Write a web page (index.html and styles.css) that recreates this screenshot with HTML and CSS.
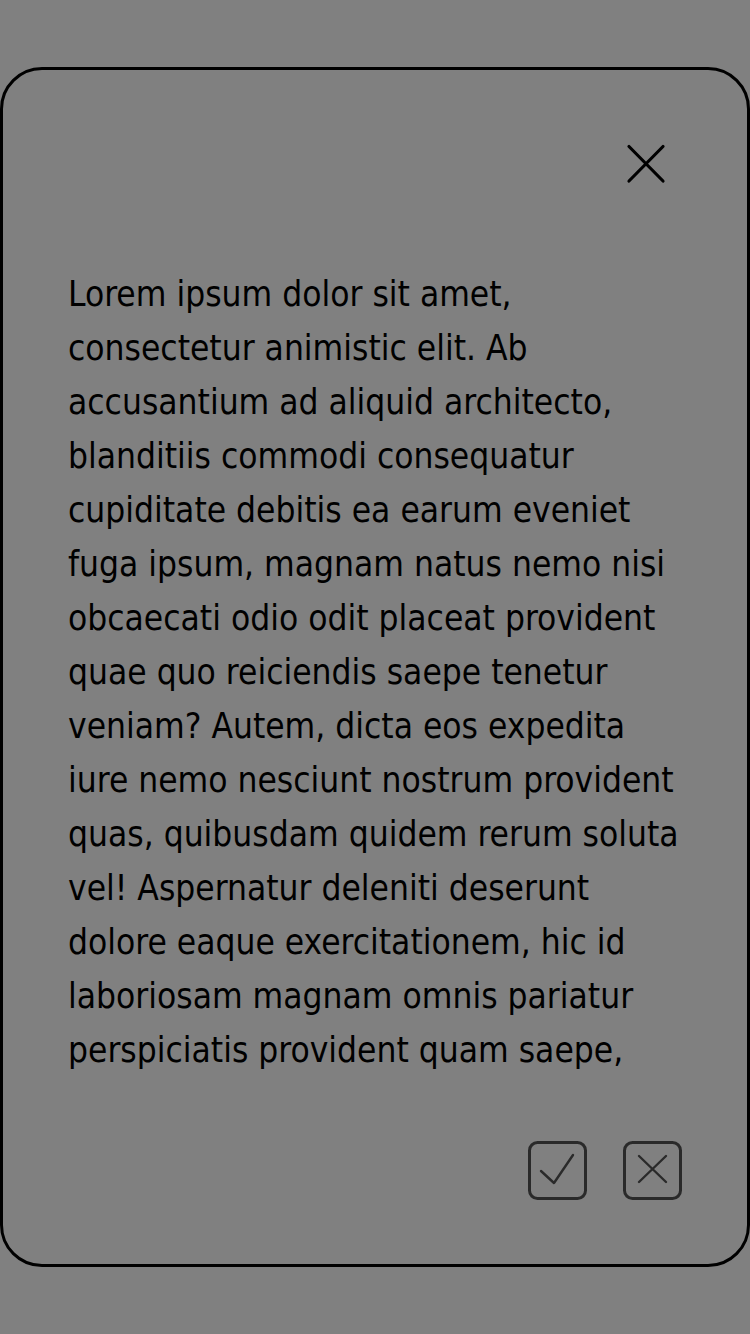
FILE: index.html
```html
<!DOCTYPE html>
<html lang="en">
<head>
<meta charset="utf-8">
<title>Dialog</title>
<link rel="stylesheet" href="styles.css">
</head>
<body>
<div class="dialog">
  <div class="dialog-head">
    <button class="close" aria-label="Close">
      <svg width="40" height="40" viewBox="0 0 40 40"><path d="M3 2.5 L37 37 M37 2.5 L3 37" stroke="#000" stroke-width="3.2" stroke-linecap="round" fill="none"/></svg>
    </button>
  </div>
  <p class="dialog-text"><span class="line">Lorem ipsum dolor sit amet,</span> <span class="line">consectetur animistic elit. Ab</span> <span class="line">accusantium ad aliquid architecto,</span> <span class="line">blanditiis commodi consequatur</span> <span class="line">cupiditate debitis ea earum eveniet</span> <span class="line">fuga ipsum, magnam natus nemo nisi</span> <span class="line">obcaecati odio odit placeat provident</span> <span class="line">quae quo reiciendis saepe tenetur</span> <span class="line">veniam? Autem, dicta eos expedita</span> <span class="line">iure nemo nesciunt nostrum provident</span> <span class="line">quas, quibusdam quidem rerum soluta</span> <span class="line">vel! Aspernatur deleniti deserunt</span> <span class="line">dolore eaque exercitationem, hic id</span> <span class="line">laboriosam magnam omnis pariatur</span> <span class="line">perspiciatis provident quam saepe,</span></p>
  <div class="dialog-actions">
    <button class="action" aria-label="Confirm">
      <svg width="59" height="59" viewBox="0 0 59 59"><rect x="1.5" y="1.5" width="56" height="56" rx="8" fill="none" stroke="#2a2a2a" stroke-width="3"/><path d="M13 30 L26 42 L45 14" fill="none" stroke="#2a2a2a" stroke-width="2.4" stroke-linecap="round" stroke-linejoin="round"/></svg>
    </button>
    <button class="action" aria-label="Cancel">
      <svg width="59" height="59" viewBox="0 0 59 59"><rect x="1.5" y="1.5" width="56" height="56" rx="8" fill="none" stroke="#2a2a2a" stroke-width="3"/><path d="M16 15 L43 41 M43 15 L16 41" fill="none" stroke="#2a2a2a" stroke-width="2.4" stroke-linecap="round"/></svg>
    </button>
  </div>
</div>
</body>
</html>
```
FILE: styles.css
```css
html, body {
  margin: 0;
  padding: 0;
  background: #808080;
}
body {
  padding-top: 67px;
  font-family: "DejaVu Sans Condensed", "DejaVu Sans", sans-serif;
}
.dialog {
  box-sizing: border-box;
  width: 750px;
  height: 1200px;
  border: 3px solid #000;
  border-radius: 42px;
  display: flex;
  flex-direction: column;
  padding: 0 65px 64px 65px;
}
.dialog-head {
  display: flex;
  justify-content: flex-end;
  padding-top: 74px;
  padding-right: 16px;
}
.close, .action {
  background: none;
  border: 0;
  padding: 0;
  margin: 0;
  display: block;
  cursor: pointer;
}
.close svg, .action svg { display: block; }
.dialog-text {
  margin: 83px 0 0 0;
  font-size: 35px;
  line-height: 54px;
  color: #000;
}
.line {
  display: block;
  white-space: nowrap;
}
.dialog-actions {
  margin-top: auto;
  display: flex;
  justify-content: flex-end;
  gap: 36px;
}
```
